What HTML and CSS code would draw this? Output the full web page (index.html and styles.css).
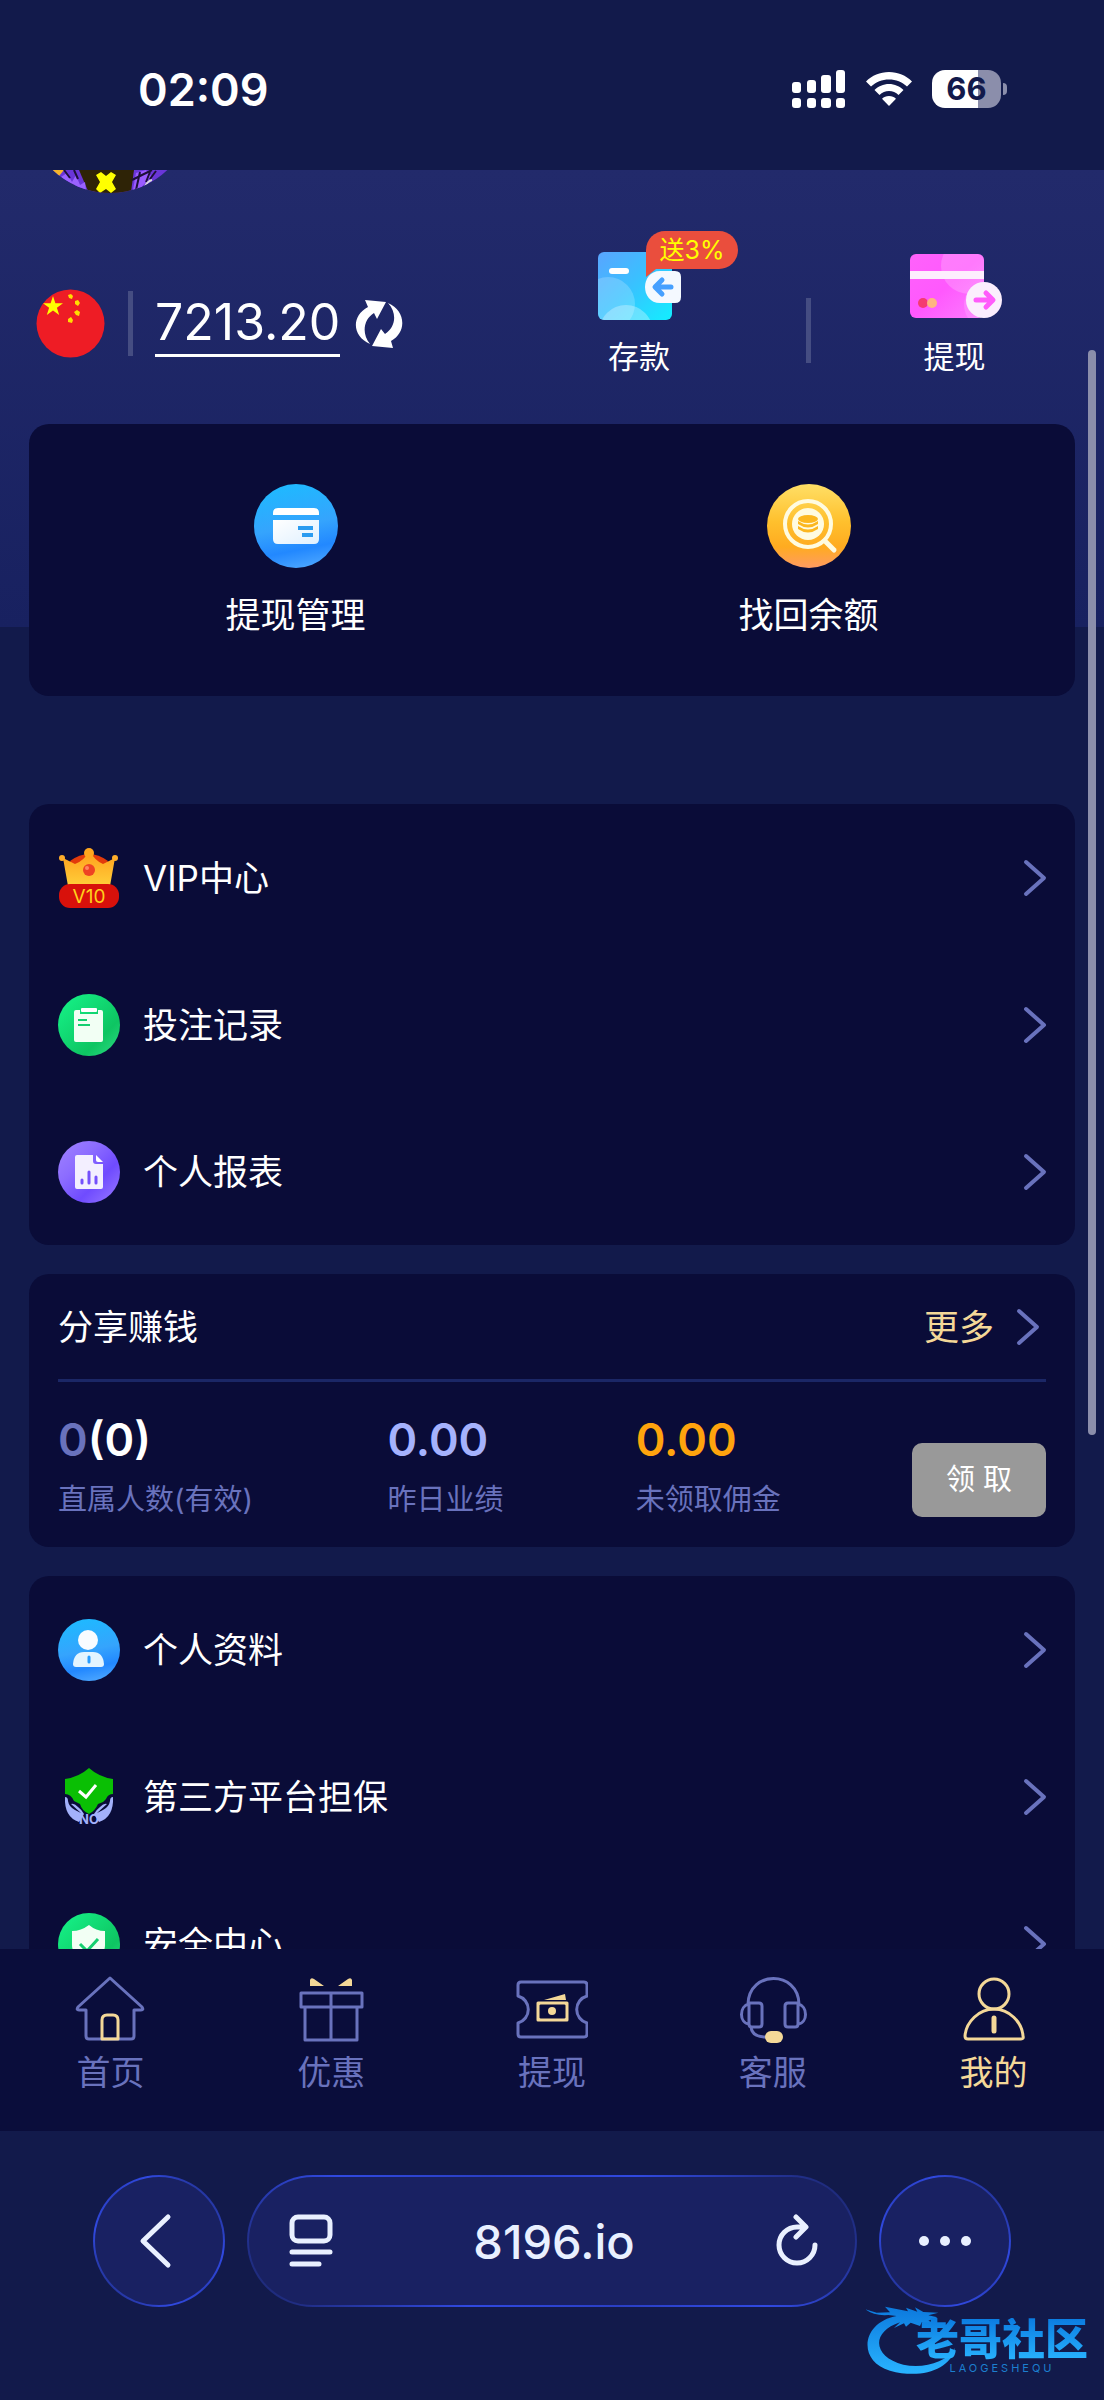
FILE: index.html
```html
<!DOCTYPE html>
<html lang="zh-CN">
<head>
<meta charset="utf-8">
<meta name="viewport" content="width=device-width, initial-scale=1">
<title>我的</title>
<link rel="stylesheet" href="styles.css">
</head>
<body>
<svg class="defs" aria-hidden="true">
  <defs>
    <linearGradient id="blue" x1="0.4" y1="0" x2="0.6" y2="1"><stop offset="0" stop-color="#1fb9ff"/><stop offset=".5" stop-color="#35a4fd"/><stop offset=".78" stop-color="#2288ff"/><stop offset="1" stop-color="#4aa5ff"/></linearGradient>
    <linearGradient id="gold" x1="0" y1="0" x2="0" y2="1"><stop offset="0" stop-color="#ffdf66"/><stop offset=".45" stop-color="#ffc02d"/><stop offset=".75" stop-color="#ffab20"/><stop offset="1" stop-color="#ff9b62"/></linearGradient>
    <linearGradient id="green" x1="0" y1="0" x2="1" y2="1"><stop offset="0" stop-color="#16f58a"/><stop offset=".7" stop-color="#0ec562"/><stop offset="1" stop-color="#2fdc83"/></linearGradient>
    <linearGradient id="violet" x1="0" y1="0" x2="1" y2="1"><stop offset="0" stop-color="#a184ff"/><stop offset=".35" stop-color="#8c6cff"/><stop offset=".65" stop-color="#6f4bff"/><stop offset="1" stop-color="#9a7cff"/></linearGradient>
    <linearGradient id="deposit" x1="0" y1="0" x2="1" y2="1"><stop offset="0" stop-color="#5aa4ff"/><stop offset=".5" stop-color="#37c3ff"/><stop offset="1" stop-color="#12efff"/></linearGradient>
    <linearGradient id="pink" x1="0" y1="0" x2="1" y2="1"><stop offset="0" stop-color="#ff62fb"/><stop offset=".5" stop-color="#ff58fd"/><stop offset="1" stop-color="#fc7dff"/></linearGradient>
    <linearGradient id="crown" x1="0" y1="0" x2="0" y2="1"><stop offset="0" stop-color="#ff9f1c"/><stop offset="1" stop-color="#ffcf3a"/></linearGradient>
    <linearGradient id="dragon" x1="0" y1="0" x2="0" y2="1"><stop offset="0" stop-color="#0c79dd"/><stop offset="1" stop-color="#29b4ff"/></linearGradient>
    <linearGradient id="paper" x1="0" y1="0" x2="1" y2="1"><stop offset="0" stop-color="#ffffff"/><stop offset="1" stop-color="#dff0ff"/></linearGradient>
  </defs>
</svg>

<div class="phone">
  <header class="status">
    <span class="status-time">02:09</span>
    <div class="status-icons">
      <svg width="54" height="38" viewBox="0 0 54 38" fill="#fff" aria-hidden="true">
        <rect x="0" y="12" width="9" height="11" rx="3"/><rect x="15" y="10" width="9" height="13" rx="3"/><rect x="29" y="5" width="10" height="18" rx="3"/><rect x="44" y="0" width="9" height="23" rx="3"/>
        <rect x="0" y="28" width="9" height="10" rx="3"/><rect x="15" y="28" width="9" height="10" rx="3"/><rect x="29" y="28" width="10" height="10" rx="3"/><rect x="44" y="28" width="9" height="10" rx="3"/>
      </svg>
      <svg width="46" height="34" viewBox="0 0 46 34" fill="#fff" aria-hidden="true">
        <path d="M23 0C14 0 6 3.500 0 9.500L5 14.500C10 10 16 7.500 23 7.500S36 10 41 14.500L46 9.500C40 3.500 32 0 23 0Z"/>
        <path d="M23 12C17.500 12 12 14.500 8.500 18L13.500 23C16 20.500 19.500 19 23 19S30 20.500 32.500 23L37.500 18C34 14.500 28.500 12 23 12Z"/>
        <path d="M23 24C20 24 18 25 16 26.800L23 34L30 26.800C28 25 26 24 23 24Z"/>
      </svg>
      <span class="battery"><span class="battery-body">66</span><span class="battery-tip"></span></span>
    </div>
  </header>

  <main class="page">
    <svg class="avatar" width="116" height="24" viewBox="0 0 116 24" aria-label="头像">
      <clipPath id="face"><circle cx="58" cy="-60" r="83"/></clipPath>
      <g clip-path="url(#face)">
        <path d="M0 0H116V24H0Z" fill="#6a36d8"/>
        <path d="M0 0H12L7 6Z" fill="#f5b52b"/>
        <path d="M27 0H82L79 22L58 24L36 21Z" fill="#2e2306"/>
        <path d="M9 7L15 3L20 12L24 5L28 15L33 12L34 20L22 16Z" fill="#9a62ff"/>
        <path d="M12 0L18 8M22 0L26 9M14 12L22 16" stroke="#1c1038" stroke-width="2"/>
        <path d="M84 3L94 0L99 6L89 18L81 20Z" fill="#9a5cff"/>
        <path d="M80 10L92 4L100 0M84 20L88 2M98 2L94 12M104 1L98 9" stroke="#1c1038" stroke-width="2" fill="none"/>
        <path d="M93 16Q96 11 100 10" stroke="#ddd" stroke-width="2" fill="none"/>
        <path d="M44 5L49 2L54 6L59 2L64 5L60 12L64 19L59 23L54 19L48 23L44 19L48 12Z" fill="#ff0"/>
      </g>
    </svg>

    <section class="account">
      <div class="wallet">
        <svg width="69" height="69" viewBox="0 0 69 69" aria-label="CNY">
          <circle cx="34.500" cy="34.500" r="34" fill="#ee1c25"/>
          <path fill="#ff0" d="M17 7L19.400 14.300H27L20.900 18.700L23.200 26L17 21.500L10.800 26L13.100 18.700L7 14.300H14.600Z"/>
          <g fill="#ffde00"><path d="M35 5L37 7L36 10L33 9L32 6Z"/><path d="M42 11L44 14L42 17L39 15L39 12Z"/><path d="M41 21L44 23L43 27L40 26L38 23Z"/><path d="M35 28L37 31L36 34L32 33L32 30Z"/></g>
        </svg>
        <span class="bar"></span>
        <a class="amount" href="#wallet">7213.20</a>
        <button class="refresh" type="button" aria-label="刷新余额">
          <svg width="48" height="50" viewBox="0 0 48 50" fill="#fff" aria-hidden="true">
            <path d="M10 1L31 3L22 20L19 14C9 20 6 34 15 45C-3 37-4 17 13 8Z"/>
            <path d="M33 4C51 12 52 33 36 42L38 49L17 47L26 30L30 35C40 29 43 15 33 4Z"/>
          </svg>
        </button>
      </div>
      <a class="action" href="#deposit">
        <span class="action-icon">
          <svg width="96" height="96" viewBox="0 0 96 96" aria-hidden="true">
            <clipPath id="dc"><rect x="7" y="13" width="74" height="68" rx="6"/></clipPath>
            <g clip-path="url(#dc)"><rect x="7" y="13" width="74" height="68" fill="url(#deposit)"/><circle cx="17" cy="65" r="27" fill="#fff" opacity=".2"/><circle cx="35" cy="93" r="27" fill="#fff" opacity=".3"/></g>
            <rect x="18" y="29" width="20" height="6" rx="3" fill="#fff"/>
            <path d="M69 32H84Q90 32 90 38V58Q90 64 84 64H69C49 64 49 32 69 32Z" fill="#f4f9ff"/>
            <path d="M71 41L64 48L71 55M65 48H80" stroke="#46a0ff" stroke-width="5" stroke-linecap="round" stroke-linejoin="round" fill="none"/>
          </svg>
          <span class="bonus">送3%</span>
        </span>
        <span>存款</span>
      </a>
      <span class="bar bar-actions"></span>
      <a class="action" href="#withdraw">
        <span class="action-icon">
          <svg width="96" height="96" viewBox="0 0 96 96" aria-hidden="true">
            <clipPath id="wc"><rect x="3" y="15" width="74" height="64" rx="6"/></clipPath>
            <g clip-path="url(#wc)"><rect x="3" y="15" width="74" height="64" fill="url(#pink)"/><circle cx="62" cy="27" r="28" fill="#fff" opacity=".2"/><circle cx="80" cy="66" r="23" fill="#fff" opacity=".15"/><rect x="3" y="32" width="74" height="8" fill="#fdeefd"/></g>
            <circle cx="16" cy="64" r="5" fill="#f43b70"/><circle cx="25" cy="64" r="5" fill="#ffb580"/>
            <circle cx="77" cy="61" r="18" fill="#fbeefd"/>
            <path d="M79 54L86 61L79 68M69 61H85" stroke="#ff5cfb" stroke-width="5" stroke-linecap="round" stroke-linejoin="round" fill="none"/>
          </svg>
        </span>
        <span>提现</span>
      </a>
    </section>

    <section class="card shortcuts">
      <a class="shortcut" href="#manage">
        <svg width="84" height="84" viewBox="0 0 84 84" aria-hidden="true">
          <circle cx="42" cy="42" r="42" fill="url(#blue)"/>
          <path d="M19 31V29Q19 24 24 24H60Q65 24 65 29V31Z" fill="#fff"/>
          <path d="M19 36H65V55Q65 60 60 60H24Q19 60 19 55Z" fill="url(#paper)"/>
          <path d="M44 44H59M48 51H59" stroke="#2a9bf0" stroke-width="4"/>
        </svg>
        <span>提现管理</span>
      </a>
      <a class="shortcut" href="#recover">
        <svg width="84" height="84" viewBox="0 0 84 84" aria-hidden="true">
          <circle cx="42" cy="42" r="42" fill="url(#gold)"/>
          <circle cx="41" cy="40" r="23" fill="none" stroke="#fffbe0" stroke-width="4"/>
          <circle cx="41" cy="40" r="16" fill="#fffbe0"/>
          <path d="M58 57L67 66" stroke="#fffbe0" stroke-width="5" stroke-linecap="round"/>
          <ellipse cx="41" cy="35" rx="10" ry="4" fill="#fcb71f"/>
          <path d="M31 37Q41 44 51 37V40Q41 47 31 40ZM31 42Q41 49 51 42V45Q41 52 31 45Z" fill="#fcb71f"/>
        </svg>
        <span>找回余额</span>
      </a>
    </section>

    <nav class="card" aria-label="记录">
      <a class="row" href="#vip">
        <svg width="62" height="62" viewBox="0 0 62 62" aria-hidden="true">
          <path d="M12 14Q31 0 50 14L45 24H17Z" fill="#e23a0b"/>
          <path d="M5 11L17 17Q27 13 30 5H33Q36 13 45 17L57 11L52 39H10Z" fill="url(#crown)"/>
          <circle cx="31" cy="6" r="5" fill="#ffa71e"/><circle cx="4" cy="11" r="3" fill="#ffae2a"/><circle cx="57" cy="11" r="3" fill="#ffae2a"/>
          <circle cx="31" cy="23" r="6" fill="#ee4323"/><circle cx="29" cy="21" r="2" fill="#ff8561"/>
          <rect x="1" y="37" width="60" height="24" rx="11" fill="#d8110b"/>
          <text class="vip-level" x="31" y="56" text-anchor="middle">V10</text>
        </svg>
        <span class="row-label">VIP中心</span>
        <svg class="chevron" width="24" height="38" viewBox="0 0 24 38" aria-hidden="true"><path d="M3 3L21 19L3 35"/></svg>
      </a>
      <a class="row" href="#bets">
        <svg width="62" height="62" viewBox="0 0 62 62" aria-hidden="true">
          <circle cx="31" cy="31" r="31" fill="url(#green)"/>
          <path d="M18 16H22V20H40V16H43Q45 16 45 18V46Q45 48 43 48H18Q16 48 16 46V18Q16 16 18 16Z" fill="#f2fff4"/>
          <rect x="23" y="14" width="16" height="4" rx="1" fill="#fff"/>
          <path d="M20 26H29M20 31H32" stroke="#15cf70" stroke-width="2"/>
        </svg>
        <span class="row-label">投注记录</span>
        <svg class="chevron" width="24" height="38" viewBox="0 0 24 38" aria-hidden="true"><path d="M3 3L21 19L3 35"/></svg>
      </a>
      <a class="row" href="#report">
        <svg width="62" height="62" viewBox="0 0 62 62" aria-hidden="true">
          <circle cx="31" cy="31" r="31" fill="url(#violet)"/>
          <path d="M19 14H35V20Q35 23 38 23H45V46Q45 48 43 48H19Q17 48 17 46V16Q17 14 19 14Z" fill="#f3efff"/>
          <path d="M38 14L45 21H40Q38 21 38 19Z" fill="#fff"/>
          <path d="M24 39V42M31 31V42M38 36V42" stroke="#7450fb" stroke-width="3" stroke-linecap="round"/>
        </svg>
        <span class="row-label">个人报表</span>
        <svg class="chevron" width="24" height="38" viewBox="0 0 24 38" aria-hidden="true"><path d="M3 3L21 19L3 35"/></svg>
      </a>
    </nav>

    <section class="card share">
      <div class="share-head">
        <h2>分享赚钱</h2>
        <a class="more" href="#share">更多
          <svg class="chevron" width="24" height="38" viewBox="0 0 24 38" aria-hidden="true"><path d="M3 3L21 19L3 35"/></svg>
        </a>
      </div>
      <div class="share-body">
        <div class="stat"><strong><span class="muted">0</span>(0)</strong><span>直属人数(有效)</span></div>
        <div class="stat"><strong class="lilac">0.00</strong><span>昨日业绩</span></div>
        <div class="stat"><strong class="orange">0.00</strong><span>未领取佣金</span></div>
        <button class="claim" type="button">领 取</button>
      </div>
    </section>

    <nav class="card" aria-label="账户">
      <a class="row" href="#profile">
        <svg width="62" height="62" viewBox="0 0 62 62" aria-hidden="true">
          <circle cx="31" cy="31" r="31" fill="url(#blue)"/>
          <circle cx="30" cy="21" r="10" fill="#f8fcff"/>
          <path d="M15 45Q16 33 26 33H35Q45 33 46 45Q46 48 43 48H18Q15 48 15 45Z" fill="#e3f4ff"/>
          <path d="M31 38V43" stroke="#269cff" stroke-width="3" stroke-linecap="round"/>
        </svg>
        <span class="row-label">个人资料</span>
        <svg class="chevron" width="24" height="38" viewBox="0 0 24 38" aria-hidden="true"><path d="M3 3L21 19L3 35"/></svg>
      </a>
      <a class="row" href="#guarantee">
        <svg width="62" height="62" viewBox="0 0 62 62" aria-hidden="true">
          <path d="M31 2Q41 11 55 13V28Q50 28 48 33L45 36L40 38Q37 45 31 48Q24 45 22 38L16 35Q13 28 7 28V13Q21 11 31 2Z" fill="#0abf04"/>
          <path d="M21 25L28 31L38 19" stroke="#fff" stroke-width="3" fill="none"/>
          <path d="M7 31Q10 31 10 35Q11 41 17 44L23 47L13 38Q16 37 20 41Q24 44 26 48L21 56Q6 51 7 31ZM55 31Q52 31 52 35Q51 41 45 44L39 47L49 38Q46 37 42 41Q38 44 36 48L41 56Q56 51 55 31Z" fill="#a3b1fb"/>
          <text class="seal" x="31" y="58" text-anchor="middle">NO</text>
        </svg>
        <span class="row-label">第三方平台担保</span>
        <svg class="chevron" width="24" height="38" viewBox="0 0 24 38" aria-hidden="true"><path d="M3 3L21 19L3 35"/></svg>
      </a>
      <a class="row" href="#security">
        <svg width="62" height="62" viewBox="0 0 62 62" aria-hidden="true">
          <circle cx="31" cy="31" r="31" fill="url(#green)"/>
          <path d="M31 12Q38 18 47 18V32Q47 44 31 50Q14 44 14 32V18Q23 18 31 12Z" fill="#f2fff4"/>
          <path d="M22 31L29 38L40 26" stroke="#15cf70" stroke-width="3" fill="none"/>
        </svg>
        <span class="row-label">安全中心</span>
        <svg class="chevron" width="24" height="38" viewBox="0 0 24 38" aria-hidden="true"><path d="M3 3L21 19L3 35"/></svg>
      </a>
    </nav>
    <span class="scroll-thumb" aria-hidden="true"></span>
  </main>

  <nav class="tabs" aria-label="主导航">
    <a class="tab" href="#home">
      <svg width="72" height="70" viewBox="0 0 72 70" aria-hidden="true"><path d="M36 4L68 33Q70 36 67 36H60V62Q60 65 57 65H15Q12 65 12 62V36H5Q2 36 4 33Z"/><path class="accent" d="M28 65V46Q28 41 33 41H39Q44 41 44 46V65Z"/></svg>
      <span>首页</span>
    </a>
    <a class="tab" href="#offers">
      <svg width="72" height="70" viewBox="0 0 72 70" aria-hidden="true"><path d="M6 19H67V33H6ZM10 33V66H62V33M36 19V66"/><path class="accent-fill" d="M15 6Q16 3 19 5L29 12H15ZM57 6Q56 3 53 5L43 12H57Z"/></svg>
      <span>优惠</span>
    </a>
    <a class="tab" href="#cash">
      <svg width="72" height="70" viewBox="0 0 72 70" aria-hidden="true"><path d="M2 22V11Q2 8 5 8H68Q71 8 71 11V22A14 14 0 0 0 71 49V60Q71 63 68 63H5Q2 63 2 60V49A14 14 0 0 0 2 22Z"/><path class="accent" d="M22 29H51V46H22Z"/><circle class="accent-fill" cx="36" cy="37" r="4"/><path class="accent-fill" d="M21 28H27L21 33ZM52 28H46L52 33ZM21 47H27L21 42ZM52 47H46L52 42ZM28 26L49 20L50 26Z"/></svg>
      <span>提现</span>
    </a>
    <a class="tab" href="#service">
      <svg width="72" height="70" viewBox="0 0 72 70" aria-hidden="true"><path d="M11 30C12-4 61-4 62 30M13 29H22Q25 29 25 32V50Q25 53 22 53H15Q12 53 12 50V29ZM61 29H51Q48 29 48 32V50Q48 53 51 53H58Q61 53 61 50ZM12 30C2 32 2 49 12 50M61 30C71 32 71 49 61 50M14 53Q15 63 29 63"/><rect class="accent-fill" x="28" y="57" width="18" height="12" rx="6"/></svg>
      <span>客服</span>
    </a>
    <a class="tab active" href="#me" aria-current="page">
      <svg width="72" height="70" viewBox="0 0 72 70" aria-hidden="true"><circle cx="36" cy="20" r="15"/><path d="M36 35C21 35 8 48 7 62Q7 65 10 65H63Q66 65 65 62C64 48 51 35 36 35Z"/><path d="M36 44V57" stroke-width="5" stroke-linecap="round"/></svg>
      <span>我的</span>
    </a>
  </nav>

  <footer class="browser">
    <button class="glass round" type="button" aria-label="返回">
      <svg width="60" height="60" viewBox="0 0 60 60" aria-hidden="true"><path d="M39 6L14 30L39 54"/></svg>
    </button>
    <div class="glass address">
      <button class="plain" type="button" aria-label="页面菜单">
        <svg width="44" height="54" viewBox="0 0 44 54" aria-hidden="true"><rect x="3" y="3" width="38" height="24" rx="6"/><path d="M3 38H41M3 50H30"/></svg>
      </button>
      <span class="url">8196.io</span>
      <button class="plain" type="button" aria-label="重新加载">
        <svg width="44" height="54" viewBox="0 0 44 54" aria-hidden="true"><path d="M40 31A18 18 0 1 1 22 13H28M21 3L31 13L21 23"/></svg>
      </button>
    </div>
    <button class="glass round" type="button" aria-label="更多">
      <svg width="60" height="60" viewBox="0 0 60 60" aria-hidden="true"><g class="dots"><circle cx="9" cy="30" r="5"/><circle cx="30" cy="30" r="5"/><circle cx="51" cy="30" r="5"/></g></svg>
    </button>
    <div class="watermark">
      <svg width="222" height="72" viewBox="258 490 666 216" aria-hidden="true">
        <path fill="url(#dragon)" d="M350 526C245 545 230 660 330 690C420 715 510 690 525 622C500 665 430 685 370 672C280 650 270 575 360 545L342 562L372 548L378 558L392 546L420 556L425 545L440 552L470 550L445 540L472 530L445 524L475 516L430 514L405 500L412 513L378 501L384 512L315 498L330 515L290 516L256 506Q280 526 325 523Z"/>
      </svg>
      <div class="watermark-text"><b>老哥社区</b><small>LAOGESHEQU</small></div>
    </div>
  </footer>
</div>
</body>
</html>
```
FILE: styles.css
```css
:root {
  --bg: #121a4b;
  --card: #0a0c38;
  --line: #6972bd;
  --gold: #f4d898;
  --ink: #ffffff;
}

* { box-sizing: border-box; }

body {
  margin: 0;
  background: var(--bg);
  color: var(--ink);
  font-family: Inter, "Noto Sans CJK SC", sans-serif;
}

a { color: inherit; text-decoration: none; }

button {
  padding: 0;
  border: 0;
  background: none;
  color: inherit;
  font: inherit;
}

svg { display: block; flex: none; }

.defs { position: absolute; width: 0; height: 0; }

.phone {
  display: flex;
  flex-direction: column;
  height: 100vh;
}

/* Status bar */
.status {
  display: flex;
  flex: none;
  align-items: center;
  justify-content: space-between;
  height: 170px;
  padding: 8px 97px 0 138px;
}

.status-time { font-size: 45px; font-weight: 600; }

.status-icons { display: flex; align-items: center; gap: 20px; }

.battery { display: flex; align-items: center; gap: 2px; }

.battery-body {
  width: 69px;
  border-radius: 13px;
  background: linear-gradient(to right, #fff 66%, #8b8eab 66%);
  color: var(--bg);
  font-size: 31px;
  font-weight: 700;
  line-height: 38px;
  text-align: center;
}

.battery-tip { width: 4px; height: 12px; border-radius: 0 6px 6px 0; background: #8b8eab; }

/* Scrolling page */
.page {
  position: relative;
  flex: 1;
  min-height: 0;
  overflow: hidden;
  background: linear-gradient(#222a6b, #182160) top / 100% 457px no-repeat;
}

.avatar { margin-left: 52px; }

.account {
  display: grid;
  grid-template-columns: 472fr 334fr 5px 287fr;
  align-items: start;
  padding: 45px 6px 45px 0;
}

.wallet {
  display: flex;
  align-items: center;
  padding: 50px 0 0 36px;
}

.bar { width: 5px; height: 65px; background: #454d82; }

.wallet .bar { margin: 0 22px 0 23px; }

.bar-actions { margin-top: 59px; }

.amount {
  border-bottom: 3px solid #fff;
  font-size: 50px;
  line-height: 64px;
}

.refresh { margin-left: 15px; }

.action {
  display: flex;
  flex-direction: column;
  align-items: center;
  font-size: 31px;
  line-height: 44px;
}

.action-icon { position: relative; }

.bonus {
  position: absolute;
  top: -8px;
  left: 55px;
  width: 92px;
  border-radius: 19px 19px 19px 0;
  background: #ea4e3d;
  color: #ff0;
  font-size: 25px;
  line-height: 38px;
  text-align: center;
}

.bonus::after {
  content: "";
  position: absolute;
  top: 38px;
  left: 0;
  border-top: 8px solid #ea4e3d;
  border-right: 10px solid transparent;
}

.card {
  margin: 0 29px 29px;
  border-radius: 20px;
  background: var(--card);
  font-size: 35px;
  line-height: 52px;
}

.shortcuts {
  display: grid;
  grid-template-columns: 1fr 1fr;
  margin-bottom: 108px;
  padding: 60px 10px 55px;
}

.shortcut {
  display: flex;
  flex-direction: column;
  align-items: center;
  gap: 21px;
}

.row {
  display: flex;
  align-items: center;
  gap: 23px;
  height: 147px;
  padding: 0 28px 0 29px;
}

.row-label { flex: 1; }

.chevron {
  fill: none;
  stroke: var(--line);
  stroke-width: 4;
  stroke-linecap: round;
  stroke-linejoin: round;
}

.vip-level { fill: #ffd21c; font-size: 19px; }

.seal { fill: #a3b1fb; font-size: 13px; font-weight: 700; }

/* Share card */
.share { padding: 0 29px 23px; }

.share-head {
  display: flex;
  align-items: center;
  justify-content: space-between;
  height: 108px;
  border-bottom: 3px solid #1b2766;
}

.share-head h2 { margin: 0; font-size: 35px; font-weight: 400; }

.more {
  display: flex;
  align-items: center;
  gap: 22px;
  padding-right: 6px;
  color: var(--gold);
}

.share-body {
  display: grid;
  grid-template-columns: 329fr 248fr 276fr 134px;
  align-items: end;
  padding-top: 30px;
}

.stat {
  display: flex;
  flex-direction: column;
  gap: 8px;
  color: var(--line);
  font-size: 29px;
  line-height: 48px;
  white-space: nowrap;
}

.stat strong {
  color: #fff;
  font-size: 45px;
  font-weight: 600;
  line-height: 56px;
}

.stat .muted { color: var(--line); }
.stat .lilac { color: #a5b2fd; }
.stat .orange { color: #ffa40d; }

.claim {
  height: 74px;
  margin-bottom: 7px;
  border-radius: 10px;
  background: #999;
  font-size: 29px;
  line-height: 48px;
}

.scroll-thumb {
  position: absolute;
  top: 180px;
  right: 8px;
  width: 8px;
  height: 61%;
  border-radius: 4px;
  background: #8b8eab;
}

/* Tab bar */
.tabs {
  display: grid;
  flex: none;
  grid-template-columns: repeat(5, 1fr);
  height: 182px;
  padding-top: 25px;
  background: #0a0d3b;
}

.tab {
  display: flex;
  flex-direction: column;
  align-items: center;
  color: var(--line);
  font-size: 34px;
  line-height: 58px;
}

.tab svg { fill: none; stroke: currentColor; stroke-width: 3; stroke-linejoin: round; }

.tab .accent { stroke: var(--gold); }
.tab .accent-fill { fill: var(--gold); stroke: none; }

.tab.active { color: var(--gold); }

/* Browser toolbar */
.browser {
  position: relative;
  display: flex;
  flex: none;
  gap: 22px;
  height: 269px;
  padding: 44px 93px 93px;
}

.glass {
  display: flex;
  align-items: center;
  justify-content: center;
  border: 2px solid transparent;
  border-radius: 66px;
  background:
    linear-gradient(#192162, #192162) padding-box,
    linear-gradient(45deg, #1b2568, #3049e0 30%, #2a3fc4 50%, #3049e0 70%, #1b2568) border-box;
  color: #e9f0ff;
}

.round { flex: none; width: 132px; }

.address { flex: 1; justify-content: space-between; padding: 0 36px 0 40px; }

.url { font-size: 47px; font-weight: 500; }

.glass svg {
  fill: none;
  stroke: currentColor;
  stroke-width: 5;
  stroke-linecap: round;
  stroke-linejoin: round;
}

.glass .dots { fill: currentColor; stroke: none; }

.watermark {
  position: absolute;
  right: 16px;
  bottom: 24px;
}

.watermark-text {
  position: absolute;
  top: 14px;
  right: 0;
  display: flex;
  flex-direction: column;
  align-items: center;
}

.watermark-text b {
  background: linear-gradient(#0b7be0, #29b4ff);
  background-clip: text;
  color: transparent;
  font-size: 43px;
  font-weight: 900;
  line-height: 43px;
}

.watermark-text small {
  color: #1c7fcf;
  font-size: 11px;
  letter-spacing: 3px;
  line-height: 14px;
}
```
